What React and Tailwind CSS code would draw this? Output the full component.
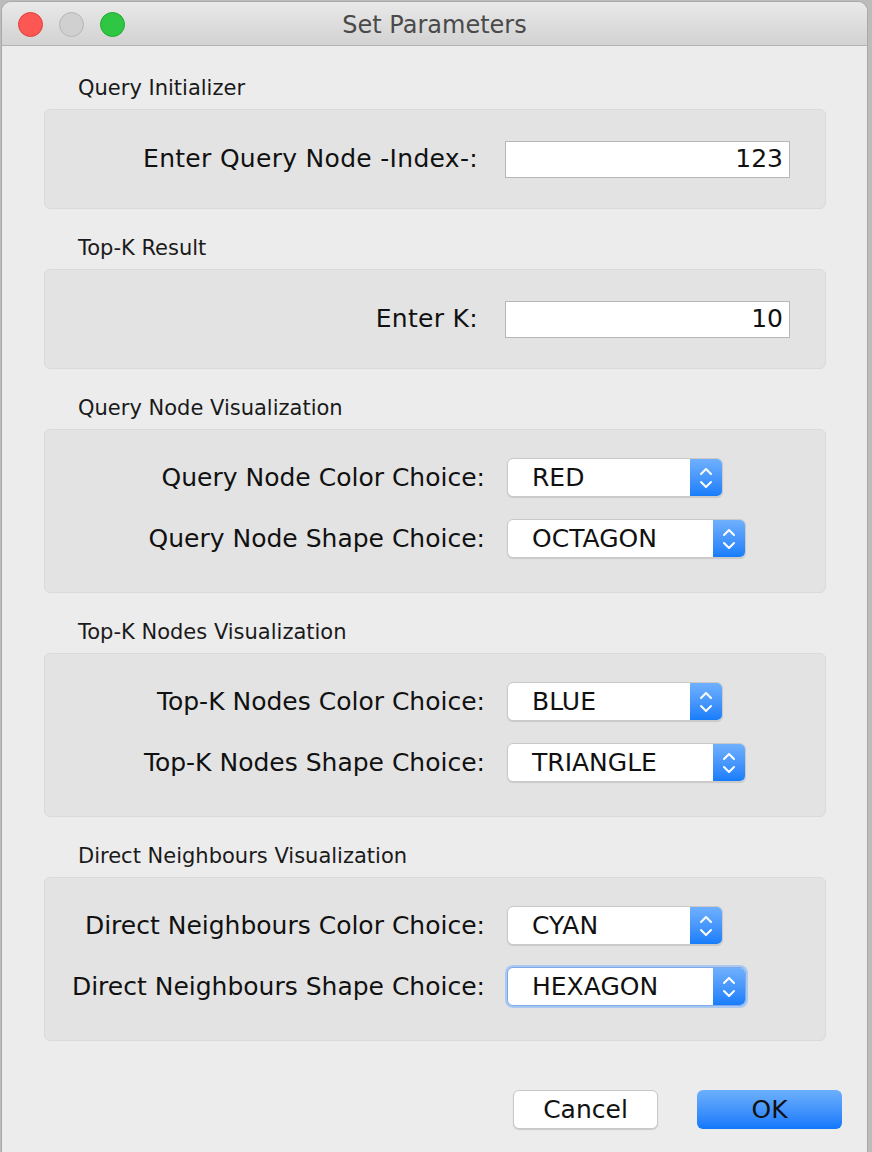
import React from 'react'

const font = { fontFamily: '"DejaVu Sans", "Liberation Sans", sans-serif' }

function Chevrons() {
  return (
    <svg width="14" height="26" viewBox="0 0 14 26" fill="none">
      <path d="M2 9 L7 4 L12 9" stroke="white" strokeWidth="2" strokeLinecap="round" strokeLinejoin="round" />
      <path d="M2 17 L7 22 L12 17" stroke="white" strokeWidth="2" strokeLinecap="round" strokeLinejoin="round" />
    </svg>
  )
}

function Combo({ value, wide, focused }) {
  return (
    <div
      className={`flex h-[39px] rounded-[6px] bg-white overflow-hidden ${wide ? 'w-[239px]' : 'w-[216px]'} ${
        focused
          ? 'border border-[#7fa9e6] shadow-[0_0_0_2px_#a9c9f2]'
          : 'border border-[#c9c9c9] shadow-[0_1px_1px_rgba(0,0,0,0.12)]'
      }`}
    >
      <div className="flex-1 flex items-center pl-[24px] text-[25px] text-[#111]">{value}</div>
      <div className="w-[32px] flex items-center justify-center bg-gradient-to-b from-[#6fb0fd] to-[#157dfb]">
        <Chevrons />
      </div>
    </div>
  )
}

function TextField({ value }) {
  return (
    <div className="w-[285px] h-[37px] bg-white border border-[#b7b7b7] flex items-center justify-end pr-[6px] text-[25px] text-[#111]">
      {value}
    </div>
  )
}

function Section({ title, children, first }) {
  return (
    <div className={first ? '' : 'mt-[26px]'}>
      <div className="h-[28px] mb-[6px] pl-[34px] flex items-center text-[21px] text-[#1a1a1a]">{title}</div>
      <div className="bg-[#e3e3e3] border border-[#dadada] rounded-[6px]">{children}</div>
    </div>
  )
}

function FieldRow({ label, value }) {
  return (
    <div className="h-[98px] flex items-center">
      <div className="w-[433px] text-right text-[25px] tracking-[0.3px] text-[#111]">{label}</div>
      <div className="ml-[27px]">
        <TextField value={value} />
      </div>
    </div>
  )
}

function ComboPanel({ rows }) {
  return (
    <div className="pt-[28px] pb-[34px] flex flex-col gap-[22px]">
      {rows.map((r, i) => (
        <div key={i} className="flex items-center h-[39px]">
          <div className="w-[440px] text-right text-[25px] text-[#111]">{r.label}</div>
          <div className="ml-[22px]">
            <Combo value={r.value} wide={r.wide} focused={r.focused} />
          </div>
        </div>
      ))}
    </div>
  )
}

export default function App() {
  return (
    <div className="w-[872px] h-[1152px] bg-[#bcbcbc] overflow-hidden" style={font}>
      <div className="ml-[1px] mt-[1px] w-[867px] h-[1160px] bg-[#ececec] rounded-t-[10px] border-x border-t border-[#a9a9a9] overflow-hidden">
        {/* Title bar */}
        <div className="relative h-[44px] bg-gradient-to-b from-[#e9e9e9] to-[#d2d2d2] border-b border-[#b4b4b4] flex items-center">
          <div className="flex items-center gap-[16px] pl-[16px] pt-[1px]">
            <div className="w-[25px] h-[25px] rounded-full bg-[#fc5753] border border-[#de3f3a]" />
            <div className="w-[25px] h-[25px] rounded-full bg-[#d0d0d0] border border-[#b5b5b5]" />
            <div className="w-[25px] h-[25px] rounded-full bg-[#2fc643] border border-[#1fa92f]" />
          </div>
          <div className="absolute inset-0 pt-[2px] flex items-center justify-center text-[24px] text-[#4a4a4a]">
            Set Parameters
          </div>
        </div>

        {/* Content */}
        <div className="pt-[29px] pl-[42px] pr-[41px]">
          <Section title="Query Initializer" first>
            <FieldRow label="Enter Query Node -Index-:" value="123" />
          </Section>
          <Section title="Top-K Result">
            <FieldRow label="Enter K:" value="10" />
          </Section>
          <Section title="Query Node Visualization">
            <ComboPanel
              rows={[
                { label: 'Query Node Color Choice:', value: 'RED' },
                { label: 'Query Node Shape Choice:', value: 'OCTAGON', wide: true },
              ]}
            />
          </Section>
          <Section title="Top-K Nodes Visualization">
            <ComboPanel
              rows={[
                { label: 'Top-K Nodes Color Choice:', value: 'BLUE' },
                { label: 'Top-K Nodes Shape Choice:', value: 'TRIANGLE', wide: true },
              ]}
            />
          </Section>
          <Section title="Direct Neighbours Visualization">
            <ComboPanel
              rows={[
                { label: 'Direct Neighbours Color Choice:', value: 'CYAN' },
                { label: 'Direct Neighbours Shape Choice:', value: 'HEXAGON', wide: true, focused: true },
              ]}
            />
          </Section>

          {/* Buttons */}
          <div className="mt-[49px] flex justify-end gap-[39px] -mr-[16px]">
            <button className="w-[145px] h-[39px] rounded-[6px] bg-white border border-[#c8c8c8] shadow-[0_1px_1px_rgba(0,0,0,0.15)] text-[25px] text-[#111]">
              Cancel
            </button>
            <button className="w-[145px] h-[39px] rounded-[6px] bg-gradient-to-b from-[#6cb0fc] to-[#0f77fb] text-[25px] text-[#111]">
              OK
            </button>
          </div>
        </div>
      </div>
    </div>
  )
}
